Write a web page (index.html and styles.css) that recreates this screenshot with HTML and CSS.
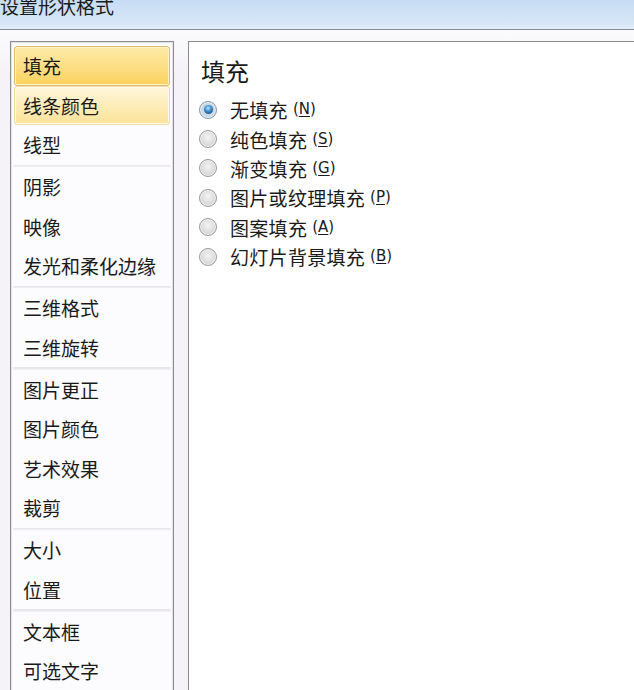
FILE: index.html
```html
<!DOCTYPE html>
<html lang="zh-CN">
<head>
<meta charset="utf-8">
<title>设置形状格式</title>
<link rel="stylesheet" href="styles.css">
</head>
<body>
<div class="titlebar"><span class="title">设置形状格式</span></div>
<div class="dialog">
  <ul class="nav">
    <li class="item selected">填充</li>
    <li class="item hover">线条颜色</li>
    <li class="item">线型</li>
    <li class="sep"></li>
    <li class="item">阴影</li>
    <li class="item">映像</li>
    <li class="item">发光和柔化边缘</li>
    <li class="sep"></li>
    <li class="item">三维格式</li>
    <li class="item">三维旋转</li>
    <li class="sep"></li>
    <li class="item">图片更正</li>
    <li class="item">图片颜色</li>
    <li class="item">艺术效果</li>
    <li class="item">裁剪</li>
    <li class="sep"></li>
    <li class="item">大小</li>
    <li class="item">位置</li>
    <li class="sep"></li>
    <li class="item">文本框</li>
    <li class="item">可选文字</li>
  </ul>
  <section class="panel">
    <h1 class="heading">填充</h1>
    <ul class="options">
      <li class="option"><span class="radio checked"></span><span class="label">无填充</span><span class="key">(<u>N</u>)</span></li>
      <li class="option"><span class="radio"></span><span class="label">纯色填充</span><span class="key">(<u>S</u>)</span></li>
      <li class="option"><span class="radio"></span><span class="label">渐变填充</span><span class="key">(<u>G</u>)</span></li>
      <li class="option"><span class="radio"></span><span class="label">图片或纹理填充</span><span class="key">(<u>P</u>)</span></li>
      <li class="option"><span class="radio"></span><span class="label">图案填充</span><span class="key">(<u>A</u>)</span></li>
      <li class="option"><span class="radio"></span><span class="label">幻灯片背景填充</span><span class="key">(<u>B</u>)</span></li>
    </ul>
  </section>
</div>
</body>
</html>
```

FILE: styles.css
```css
* { box-sizing: border-box; }
html, body {
  margin: 0;
  padding: 0;
  width: 634px;
  height: 690px;
  overflow: hidden;
}
body {
  background: #f5f4f8;
  font-family: "Noto Sans CJK SC", "Noto Sans", sans-serif;
  color: #1c1c1c;
}
.titlebar {
  height: 30px;
  background: linear-gradient(#c6dcf4, #d6e6f7 80%, #e4eef9);
  border-bottom: 1px solid #7e8a97;
  overflow: hidden;
}
.title {
  display: block;
  margin-top: -5px;
  font-size: 19px;
  line-height: 22px;
  color: #1a1a1a;
}
.dialog {
  display: flex;
  gap: 14px;
  padding: 11px 0 0 10px;
  height: 720px;
  background: linear-gradient(#fbfbfc, #f5f3f8 40px);
}
.nav {
  list-style: none;
  margin: 0;
  padding: 4px 0 0;
  width: 164px;
  flex: none;
  border: 1px solid #8c8c8c;
  box-shadow: inset 0 0 0 1px #e4e2e8;
  background: #fcfbfd;
}
.item {
  height: 39.5px;
  margin: 0 3px;
  padding-left: 8px;
  display: flex;
  align-items: center;
  font-size: 19px;
  line-height: 1;
  border: 1px solid transparent;
  border-radius: 3px;
  color: #1a1a1a;
}
.item.selected {
  background: linear-gradient(#fdeaa8, #fde08a 45%, #fbd25e);
  border-color: #dfbc6b;
  box-shadow: inset 0 0 0 1px #fff3c9;
}
.item.hover {
  background: linear-gradient(#fff6dc, #fdebb2 60%, #fbe29a);
  border-color: #efdca6;
  box-shadow: inset 0 0 0 1px #fffaea;
}
.sep {
  height: 2.5px;
  margin: 0 2px;
  background: linear-gradient(#e6e4ea, #f1f0f3);
}
.panel {
  flex: 1;
  border: 1px solid #8c8c8c;
  border-right: none;
  background: #ffffff;
  padding: 13px 0 0 12px;
}
.heading {
  margin: 0;
  font-size: 24px;
  font-weight: normal;
  line-height: 32px;
  color: #1a1a1a;
}
.options {
  list-style: none;
  margin: 8px 0 0;
  padding: 0;
}
.option {
  height: 29.4px;
  display: flex;
  align-items: center;
  font-size: 19px;
  line-height: 1;
  color: #1a1a1a;
}
.radio {
  position: relative;
  width: 18px;
  height: 18px;
  flex: none;
  margin-left: -2px;
  margin-right: 13px;
  border-radius: 50%;
  border: 1px solid #9a9a9a;
  background: radial-gradient(circle at 50% 40%, #f4f4f4 0, #dcdcdc 55%, #c8c8c8 100%);
  box-shadow: inset 0 0 0 1px #f2f2f2;
}
.radio.checked {
  border-color: #8197ad;
  background: radial-gradient(circle, #d7e3ee 0, #bccbdb 100%);
}
.radio.checked::after {
  content: "";
  position: absolute;
  left: 3.5px;
  top: 3.5px;
  width: 9px;
  height: 9px;
  border-radius: 50%;
  background: radial-gradient(circle at 45% 35%, #cde9ff 0, #4b98d8 35%, #1a5796 75%, #0f3b6d 100%);
}
.label {
  letter-spacing: 0.3px;
}
.key {
  margin-left: 5px;
  font-family: "DejaVu Sans", "Liberation Sans", sans-serif;
  font-size: 15px;
  letter-spacing: 0;
}
.key u {
  text-decoration-thickness: 1px;
  text-underline-offset: 2px;
}
```
